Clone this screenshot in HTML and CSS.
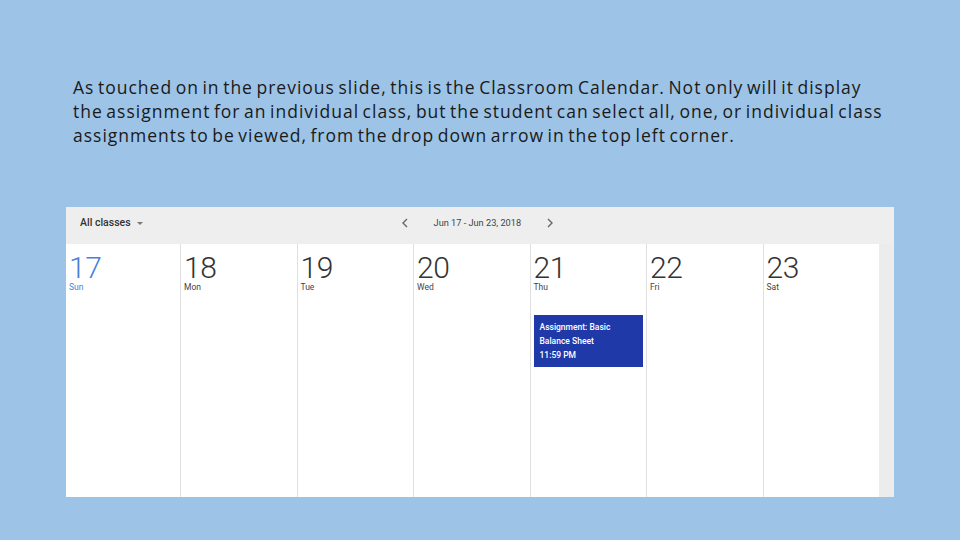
FILE: index.html
```html
<!DOCTYPE html>
<html>
<head>
<meta charset="utf-8">
<link rel="stylesheet" href="styles.css">
</head>
<body>
<div class="slide">
  <p class="caption">As touched on in the previous slide, this is the Classroom Calendar. Not only will it display<br>the assignment for an individual class, but the student can select all, one, or individual class<br>assignments to be viewed, from the drop down arrow in the top left corner.</p>
  <div class="shot">
    <div class="cal">
      <div class="bar">
        <div class="filter">All classes <span class="caret"></span></div>
        <div class="nav">
          <svg class="chev" width="8" height="10" viewBox="0 0 8 10"><path d="M6 1 L2 5 L6 9" fill="none" stroke="#666" stroke-width="1.4"/></svg>
          <span class="range">Jun 17 - Jun 23, 2018</span>
          <svg class="chev" width="8" height="10" viewBox="0 0 8 10"><path d="M2 1 L6 5 L2 9" fill="none" stroke="#666" stroke-width="1.4"/></svg>
        </div>
      </div>
      <div class="days">
        <div class="day today"><div class="num">17</div><div class="dn">Sun</div></div>
        <div class="day"><div class="num">18</div><div class="dn">Mon</div></div>
        <div class="day"><div class="num">19</div><div class="dn">Tue</div></div>
        <div class="day"><div class="num">20</div><div class="dn">Wed</div></div>
        <div class="day"><div class="num">21</div><div class="dn">Thu</div>
          <div class="event">Assignment: Basic<br>Balance Sheet<br>11:59 PM</div>
        </div>
        <div class="day"><div class="num">22</div><div class="dn">Fri</div></div>
        <div class="day"><div class="num">23</div><div class="dn">Sat</div></div>
      </div>
    </div>
    <div class="scroll"></div>
  </div>
</div>
</body>
</html>
```
FILE: styles.css
```css
html, body {
  margin: 0;
  padding: 0;
}
body {
  width: 960px;
  height: 540px;
  background: #9dc3e6;
  overflow: hidden;
}
.slide {
  padding: 75px 0 0 73px;
}
.caption {
  margin: 0;
  font-family: "Open Sans", "Liberation Sans", sans-serif;
  font-size: 17.5px;
  line-height: 24px;
  color: #1a1a1a;
  letter-spacing: 1px;
  word-spacing: -2px;
  white-space: nowrap;
}
.shot {
  margin: 60px 0 0 -7px;
  width: 828px;
  height: 290px;
  display: flex;
  background: #eeeeee;
}
.cal {
  width: 813px;
  display: flex;
  flex-direction: column;
  font-family: Roboto, "Liberation Sans", sans-serif;
}
.bar {
  height: 37px;
  flex: none;
  display: flex;
  align-items: flex-start;
  padding-top: 9px;
  box-sizing: border-box;
}
.filter {
  margin-left: 14px;
  font-size: 10.5px;
  font-weight: 500;
  color: #333;
  display: flex;
  align-items: center;
  gap: 6px;
}
.caret {
  width: 0;
  height: 0;
  border-left: 3.5px solid transparent;
  border-right: 3.5px solid transparent;
  border-top: 3.5px solid #777;
  margin-top: 1px;
}
.nav {
  margin-left: 258px;
  display: flex;
  align-items: center;
  height: 13px;
}
.range {
  font-size: 9.2px;
  color: #444;
  margin: 0 25px 0 25px;
}
.chev {
  display: block;
}
.days {
  flex: 1;
  display: grid;
  grid-template-columns: 114px repeat(6, 1fr);
  background: #e0e0e0;
  gap: 1px;
}
.day {
  background: #fff;
  padding: 11px 0 0 3px;
}
.num {
  font-size: 30px;
  font-weight: 300;
  line-height: 26px;
  height: 26px;
  color: #333;
  letter-spacing: -0.5px;
}
.dn {
  font-size: 8.5px;
  line-height: 11px;
  color: #444;
  margin-top: 1px;
}
.today .num, .today .dn {
  color: #4a7fdc;
}
.event {
  margin: 22px 3px 0 0;
  background: #1f39a8;
  color: #fff;
  font-size: 8.5px;
  font-weight: 500;
  line-height: 14px;
  padding: 5px 6px 6px;
  height: 41px;
}
.scroll {
  flex: 1;
  margin-top: 37px;
  background: #ececec;
}
```
